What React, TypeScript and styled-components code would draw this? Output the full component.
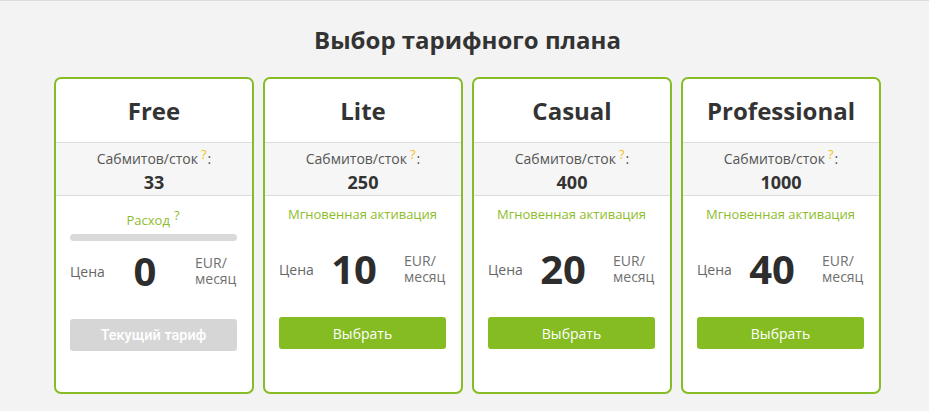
import styled, { createGlobalStyle } from "styled-components";

const GlobalStyle = createGlobalStyle`
  html, body {
    margin: 0;
    padding: 0;
    background: #f3f3f3;
  }
  body {
    font-family: "Open Sans", "Liberation Sans", sans-serif;
    color: #555;
  }
`;

const Page = styled.div`
  min-height: 411px;
  box-sizing: border-box;
  border-top: 1px solid #dcdcdc;
  padding: 0 0 0 6px;
`;

const Inner = styled.div`
  width: 827px;
  margin: 0 auto;
`;

const Heading = styled.h1`
  margin: 0;
  padding-top: 23px;
  height: 53px;
  line-height: 32px;
  text-align: center;
  font-size: 24px;
  font-weight: 700;
  color: #333;
`;

const Grid = styled.div`
  display: grid;
  grid-template-columns: repeat(4, 200px);
  column-gap: 9px;
  align-items: stretch;
`;

const Card = styled.div`
  background: #fff;
  border: 2px solid #86bc25;
  border-radius: 7px;
  display: flex;
  flex-direction: column;
  overflow: hidden;
`;

const CardTitle = styled.div`
  height: 63px;
  line-height: 63px;
  text-align: center;
  font-size: 24px;
  font-weight: 700;
  color: #333;
  border-bottom: 1px solid #dcdcdc;
`;

const Stock = styled.div`
  background: #f6f6f6;
  padding-top: 6px;
  text-align: center;
  border-bottom: 1px solid #dcdcdc;
`;

const StockLabel = styled.div`
  font-size: 14px;
  line-height: 20px;
  color: #555;
`;

const Hint = styled.sup`
  color: #f2c314;
  font-size: 13px;
  line-height: 0;
  margin: 0 1px 0 3px;
  vertical-align: 5px;
`;

const GreenHint = styled(Hint)`
  color: #8dbd2c;
  margin-left: 4px;
`;

const StockValue = styled.div`
  font-size: 18px;
  font-weight: 700;
  line-height: 26px;
  color: #333;
`;

const Body = styled.div<{ $top: number }>`
  flex: 1;
  display: flex;
  flex-direction: column;
  padding: ${(p) => p.$top}px 15px 41px 14px;
`;

const Note = styled.div`
  text-align: center;
  font-size: 13px;
  line-height: 20px;
  color: #8dbd2c;
`;

const Bar = styled.div`
  height: 7px;
  margin-top: 4px;
  border-radius: 4px;
  background: #dadada;
`;

const PriceRow = styled.div<{ $top: number }>`
  margin-top: ${(p) => p.$top}px;
  height: 48px;
  display: flex;
  align-items: center;
`;

const PriceLabel = styled.span`
  font-size: 14px;
  color: #666;
  width: 50px;
`;

const Amount = styled.span`
  width: 50px;
  font-size: 40px;
  font-weight: 700;
  color: #2d2d2d;
  line-height: 48px;
  text-align: center;
`;

const Unit = styled.div`
  margin-left: auto;
  width: 42px;
  display: flex;
  flex-direction: column;
`;

const UnitLine = styled.span`
  font-size: 14px;
  line-height: 16px;
  color: #707070;
`;

const Button = styled.button<{ $current?: boolean }>`
  margin-top: 24px;
  height: 32px;
  border: none;
  border-radius: 3px;
  font-family: ${(p) => (p.$current ? "Roboto, " : "")}"Open Sans", sans-serif;
  font-size: ${(p) => (p.$current ? 14.5 : 14)}px;
  font-weight: ${(p) => (p.$current ? 500 : 400)};
  color: #fff;
  background: ${(p) => (p.$current ? "#d6d6d6" : "#84bc22")};
  cursor: pointer;
`;

type Plan = { name: string; stock: number; price: number; current?: boolean };

const plans: Plan[] = [
  { name: "Free", stock: 33, price: 0, current: true },
  { name: "Lite", stock: 250, price: 10 },
  { name: "Casual", stock: 400, price: 20 },
  { name: "Professional", stock: 1000, price: 40 },
];

function Price({ value, top }: { value: number; top: number }) {
  return (
    <PriceRow $top={top}>
      <PriceLabel>Цена</PriceLabel>
      <Amount>{value}</Amount>
      <Unit>
        <UnitLine>EUR/</UnitLine>
        <UnitLine>месяц</UnitLine>
      </Unit>
    </PriceRow>
  );
}

export default function App() {
  return (
    <>
      <GlobalStyle />
      <Page>
        <Inner>
          <Heading>Выбор тарифного плана</Heading>
          <Grid>
            {plans.map((plan) => (
              <Card key={plan.name}>
                <CardTitle>{plan.name}</CardTitle>
                <Stock>
                  <StockLabel>
                    Сабмитов/сток<Hint>?</Hint>:
                  </StockLabel>
                  <StockValue>{plan.stock}</StockValue>
                </Stock>
                {plan.current ? (
                  <Body $top={14}>
                    <Note>
                      Расход<GreenHint>?</GreenHint>
                    </Note>
                    <Bar />
                    <Price value={plan.price} top={6} />
                    <Button $current>Текущий тариф</Button>
                  </Body>
                ) : (
                  <Body $top={8}>
                    <Note>Мгновенная активация</Note>
                    <Price value={plan.price} top={21} />
                    <Button>Выбрать</Button>
                  </Body>
                )}
              </Card>
            ))}
          </Grid>
        </Inner>
      </Page>
    </>
  );
}
